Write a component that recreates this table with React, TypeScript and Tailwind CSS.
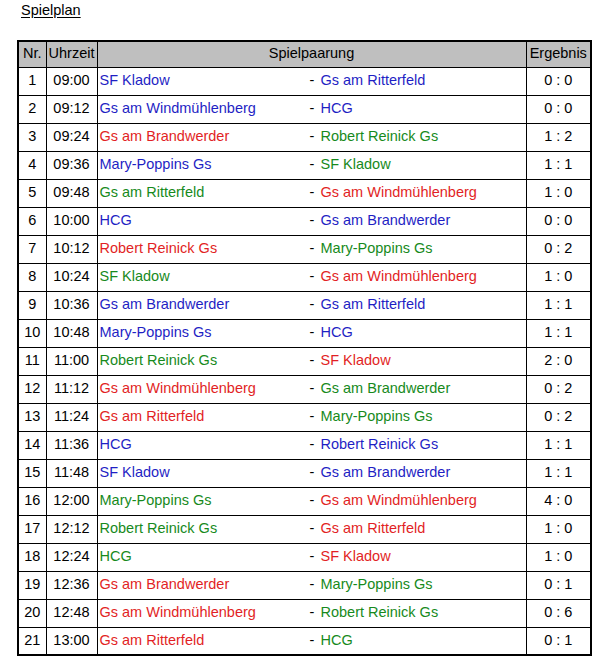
import React from 'react';

type Team = { name: string; color: 'b' | 'r' | 'g' };
type Game = { nr: number; time: string; home: Team; away: Team; score: string };

const colorClass: Record<Team['color'], string> = {
    b: 'text-[#1f1fc4]',
    r: 'text-[#e21f25]',
    g: 'text-[#178a1c]',
};

const t = (name: string, color: Team['color']): Team => ({ name, color });

const games: Game[] = [
    { nr: 1, time: '09:00', home: t('SF Kladow', 'b'), away: t('Gs am Ritterfeld', 'b'), score: '0 : 0' },
    { nr: 2, time: '09:12', home: t('Gs am Windmühlenberg', 'b'), away: t('HCG', 'b'), score: '0 : 0' },
    { nr: 3, time: '09:24', home: t('Gs am Brandwerder', 'r'), away: t('Robert Reinick Gs', 'g'), score: '1 : 2' },
    { nr: 4, time: '09:36', home: t('Mary-Poppins Gs', 'b'), away: t('SF Kladow', 'g'), score: '1 : 1' },
    { nr: 5, time: '09:48', home: t('Gs am Ritterfeld', 'g'), away: t('Gs am Windmühlenberg', 'r'), score: '1 : 0' },
    { nr: 6, time: '10:00', home: t('HCG', 'b'), away: t('Gs am Brandwerder', 'b'), score: '0 : 0' },
    { nr: 7, time: '10:12', home: t('Robert Reinick Gs', 'r'), away: t('Mary-Poppins Gs', 'g'), score: '0 : 2' },
    { nr: 8, time: '10:24', home: t('SF Kladow', 'g'), away: t('Gs am Windmühlenberg', 'r'), score: '1 : 0' },
    { nr: 9, time: '10:36', home: t('Gs am Brandwerder', 'b'), away: t('Gs am Ritterfeld', 'b'), score: '1 : 1' },
    { nr: 10, time: '10:48', home: t('Mary-Poppins Gs', 'b'), away: t('HCG', 'b'), score: '1 : 1' },
    { nr: 11, time: '11:00', home: t('Robert Reinick Gs', 'g'), away: t('SF Kladow', 'r'), score: '2 : 0' },
    { nr: 12, time: '11:12', home: t('Gs am Windmühlenberg', 'r'), away: t('Gs am Brandwerder', 'g'), score: '0 : 2' },
    { nr: 13, time: '11:24', home: t('Gs am Ritterfeld', 'r'), away: t('Mary-Poppins Gs', 'g'), score: '0 : 2' },
    { nr: 14, time: '11:36', home: t('HCG', 'b'), away: t('Robert Reinick Gs', 'b'), score: '1 : 1' },
    { nr: 15, time: '11:48', home: t('SF Kladow', 'b'), away: t('Gs am Brandwerder', 'b'), score: '1 : 1' },
    { nr: 16, time: '12:00', home: t('Mary-Poppins Gs', 'g'), away: t('Gs am Windmühlenberg', 'r'), score: '4 : 0' },
    { nr: 17, time: '12:12', home: t('Robert Reinick Gs', 'g'), away: t('Gs am Ritterfeld', 'r'), score: '1 : 0' },
    { nr: 18, time: '12:24', home: t('HCG', 'g'), away: t('SF Kladow', 'r'), score: '1 : 0' },
    { nr: 19, time: '12:36', home: t('Gs am Brandwerder', 'r'), away: t('Mary-Poppins Gs', 'g'), score: '0 : 1' },
    { nr: 20, time: '12:48', home: t('Gs am Windmühlenberg', 'r'), away: t('Robert Reinick Gs', 'g'), score: '0 : 6' },
    { nr: 21, time: '13:00', home: t('Gs am Ritterfeld', 'r'), away: t('HCG', 'g'), score: '0 : 1' },
];

const App: React.FC = () => {
    return (
        <div className="min-h-screen bg-white text-black font-['Liberation_Sans',Arial,sans-serif] text-[14.5px]">
            <div className="pl-[21px] pt-[1px] leading-[18px] underline underline-offset-[2px]">Spielplan</div>

            <table className="ml-[17px] mt-[21px] w-[573px] table-fixed border-collapse border-2 border-black">
                <colgroup>
                    <col className="w-[28px]" />
                    <col className="w-[51px]" />
                    <col className="w-[429px]" />
                    <col className="w-[65px]" />
                </colgroup>
                <thead>
                    <tr className="h-[26px] bg-[#bfbfbf]">
                        <th className="border border-black font-normal text-center p-0">Nr.</th>
                        <th className="border border-black font-normal text-center p-0">Uhrzeit</th>
                        <th className="border border-black font-normal text-center p-0">Spielpaarung</th>
                        <th className="border border-black font-normal text-center p-0">Ergebnis</th>
                    </tr>
                </thead>
                <tbody>
                    {games.map((g) => (
                        <tr key={g.nr} className="h-[28px]">
                            <td className="border border-black text-center p-0">{g.nr}</td>
                            <td className="border border-black text-center p-0">{g.time}</td>
                            <td className="border border-black p-0 pl-[2px]">
                                <div className="flex">
                                    <span className={`w-[210px] ${colorClass[g.home.color]}`}>{g.home.name}</span>
                                    <span className="w-[11px] text-[#000]">-</span>
                                    <span className={colorClass[g.away.color]}>{g.away.name}</span>
                                </div>
                            </td>
                            <td className="border border-black text-center p-0">{g.score}</td>
                        </tr>
                    ))}
                </tbody>
            </table>
        </div>
    );
};

export default App;
